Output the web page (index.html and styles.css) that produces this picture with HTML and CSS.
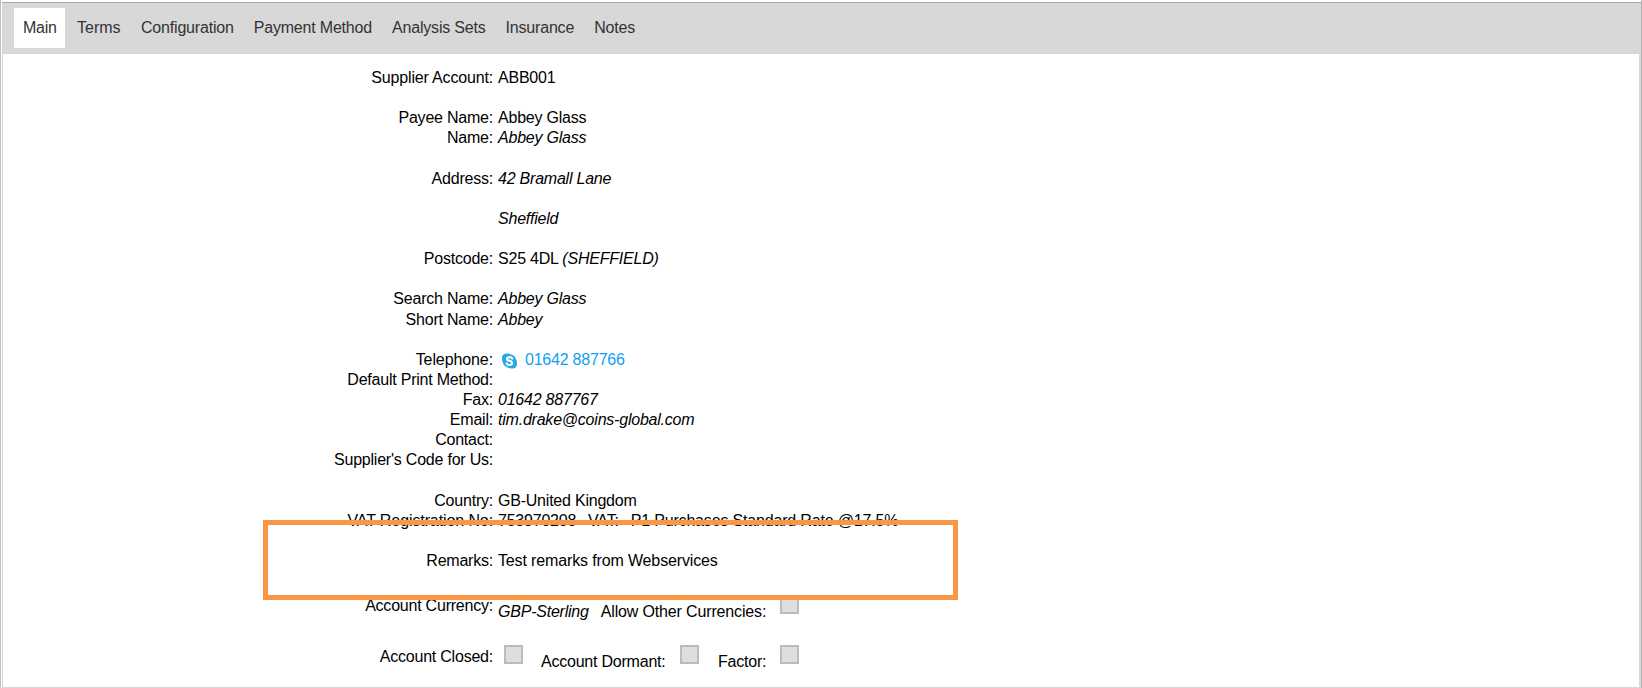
FILE: index.html
```html
<!DOCTYPE html>
<html lang="en">
<head>
<meta charset="utf-8">
<title>Supplier</title>
<link rel="stylesheet" href="styles.css">
</head>
<body>
<div class="window">
<nav class="tabs">
<a class="tab active">Main</a><a class="tab terms">Terms</a><a class="tab">Configuration</a><a class="tab">Payment Method</a><a class="tab">Analysis Sets</a><a class="tab">Insurance</a><a class="tab">Notes</a>
</nav>
<main class="form">
<div class="row gap"><span class="label account">Supplier Account:</span><span>ABB001</span></div>
<div class="row"><span class="label">Payee Name:</span><span>Abbey Glass</span></div>
<div class="row gap"><span class="label">Name:</span><i>Abbey Glass</i></div>
<div class="row gap"><span class="label">Address:</span><i>42 Bramall Lane</i></div>
<div class="row gap"><span class="label"></span><i>Sheffield</i></div>
<div class="row gap"><span class="label">Postcode:</span><span>S25 4DL <i>(SHEFFIELD)</i></span></div>
<div class="row"><span class="label">Search Name:</span><i>Abbey Glass</i></div>
<div class="row gap"><span class="label">Short Name:</span><i>Abbey</i></div>
<div class="row"><span class="label wide">Telephone:</span><a class="phone"><svg class="skype" viewBox="0 0 16 16"><rect width="11" height="11" rx="4.500" fill="#27a9e1"/><rect x="5" y="5" width="11" height="11" rx="4.500" fill="#27a9e1"/><circle cx="8" cy="8" r="7.300" fill="#27a9e1"/><path fill="none" stroke="#fff" stroke-width="2.200" stroke-linecap="round" d="M11 5.400C10.200 3.400 5.400 3.300 5.300 5.700 5.200 8.400 10.900 7.200 10.900 10.200 10.800 12.800 5.700 12.800 5 10.500"/></svg><span>01642 887766</span></a></div>
<div class="row"><span class="label">Default Print Method:</span></div>
<div class="row"><span class="label">Fax:</span><i>01642 887767</i></div>
<div class="row"><span class="label">Email:</span><i>tim.drake@coins-global.com</i></div>
<div class="row"><span class="label">Contact:</span></div>
<div class="row gap"><span class="label">Supplier's Code for Us:</span></div>
<div class="row"><span class="label">Country:</span><span>GB-United Kingdom</span></div>
<div class="row gap"><span class="label wide">VAT Registration No:</span><span class="vat"><span>753970208</span><span>VAT:</span><span class="rate">P1 Purchases Standard Rate @17.5%</span></span></div>
<div class="row"><span class="label">Remarks:</span><span class="remarks">Test remarks from Webservices</span></div>
<div class="row checks currency"><span class="label">Account Currency:</span><i class="low">GBP-Sterling</i><span class="low other">Allow Other Currencies:</span><span class="box"></span></div>
<div class="row checks closed"><span class="label">Account Closed:</span><span class="box first"></span><span class="low dormant">Account Dormant:</span><span class="box"></span><span class="low factor">Factor:</span><span class="box"></span></div>
</main>
<div class="highlight"></div>
</div>
</body>
</html>
```
FILE: styles.css
```css
* { box-sizing: border-box; }
body { margin: 0; background: #fff; font: 16px/20.14px "Liberation Sans", Arial, sans-serif; color: #000; overflow: hidden; }
.window { position: relative; height: 688px; padding-top: 2px; border-left: 1px solid #c0c0c0; border-right: 1px solid #b0b0b0; }
.tabs { display: flex; height: 52px; margin-left: 1px; padding: 5px 0 7px 12px; background: #d8d8d8; border-top: 1px solid #a6a6a6; color: #333; }
.tab { height: 40px; padding: 0 11px 0 9px; line-height: 39px; letter-spacing: -0.19px; }
.active { width: 51px; padding-right: 0; background: #fff; margin-right: 3px; letter-spacing: -0.3px; }
.terms { width: 64px; letter-spacing: 0; }
.form { height: 634px; margin-left: 1px; padding-top: 14px; border: solid #d8d8d8; border-width: 0 2px 1px 1px; letter-spacing: -0.22px; white-space: nowrap; }
.row { display: flex; gap: 5px; height: 20.14px; }
.gap { margin-bottom: 20.14px; }
.label { width: 490px; text-align: right; flex: none; }
.wide { letter-spacing: -0.1px; }
.account { letter-spacing: -0.17px; }
.phone { display: flex; color: #109ff0; padding-left: 4px; gap: 8px; }
.skype { width: 15px; height: 16px; margin-top: 3px; }
.vat { display: flex; gap: 12px; }
.rate { letter-spacing: -0.17px; }
.remarks { letter-spacing: -0.14px; }
.checks { height: 51px; }
.currency { margin-top: 25px; }
.low { padding-top: 6px; }
.closed .low { padding-top: 5px; }
.other { margin-left: 7px; width: 165px; letter-spacing: -0.15px; }
.box { width: 19px; height: 19px; margin: -2px 0 0 9px; border: 2px solid #bbb; background: #dedede; }
.currency .box { margin: -1px 0 0 9px; }
.first { margin-left: 6px; }
.dormant { margin-left: 13px; width: 125px; }
.factor { margin-left: 14px; width: 48px; }
.highlight { position: absolute; left: 262px; top: 520px; width: 695px; height: 80px; border: 5px solid #fa9746; }
```
